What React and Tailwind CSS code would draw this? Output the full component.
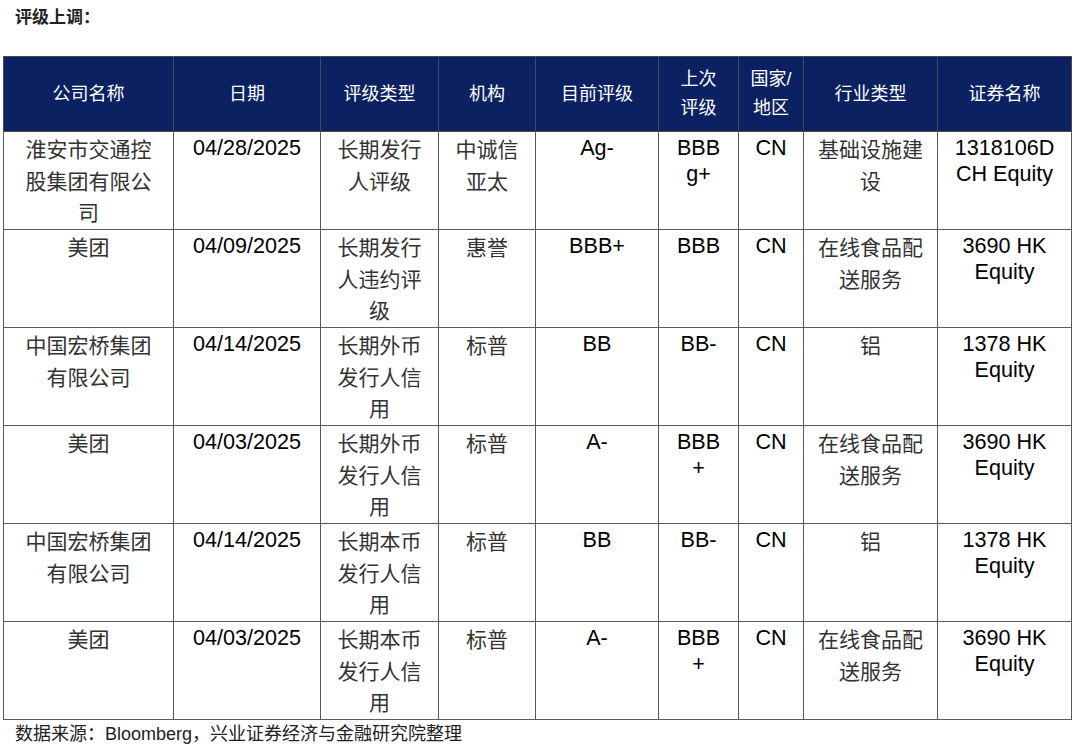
const font = { fontFamily: '"Liberation Sans", "Noto Sans CJK SC", sans-serif' };

const cols = [170, 147, 118, 97, 123, 80, 65, 134, 134];

const headers = [
  ["公司名称"],
  ["日期"],
  ["评级类型"],
  ["机构"],
  ["目前评级"],
  ["上次", "评级"],
  ["国家/", "地区"],
  ["行业类型"],
  ["证券名称"],
];

// each cell: [lines, isLatin]
const rows = [
  [
    [["淮安市交通控", "股集团有限公", "司"]],
    [["04/28/2025"], 1],
    [["长期发行", "人评级"]],
    [["中诚信", "亚太"]],
    [["Ag-"], 1],
    [["BBB", "g+"], 1],
    [["CN"], 1],
    [["基础设施建", "设"]],
    [["1318106D", "CH Equity"], 1],
  ],
  [
    [["美团"]],
    [["04/09/2025"], 1],
    [["长期发行", "人违约评", "级"]],
    [["惠誉"]],
    [["BBB+"], 1],
    [["BBB"], 1],
    [["CN"], 1],
    [["在线食品配", "送服务"]],
    [["3690 HK", "Equity"], 1],
  ],
  [
    [["中国宏桥集团", "有限公司"]],
    [["04/14/2025"], 1],
    [["长期外币", "发行人信", "用"]],
    [["标普"]],
    [["BB"], 1],
    [["BB-"], 1],
    [["CN"], 1],
    [["铝"]],
    [["1378 HK", "Equity"], 1],
  ],
  [
    [["美团"]],
    [["04/03/2025"], 1],
    [["长期外币", "发行人信", "用"]],
    [["标普"]],
    [["A-"], 1],
    [["BBB", "+"], 1],
    [["CN"], 1],
    [["在线食品配", "送服务"]],
    [["3690 HK", "Equity"], 1],
  ],
  [
    [["中国宏桥集团", "有限公司"]],
    [["04/14/2025"], 1],
    [["长期本币", "发行人信", "用"]],
    [["标普"]],
    [["BB"], 1],
    [["BB-"], 1],
    [["CN"], 1],
    [["铝"]],
    [["1378 HK", "Equity"], 1],
  ],
  [
    [["美团"]],
    [["04/03/2025"], 1],
    [["长期本币", "发行人信", "用"]],
    [["标普"]],
    [["A-"], 1],
    [["BBB", "+"], 1],
    [["CN"], 1],
    [["在线食品配", "送服务"]],
    [["3690 HK", "Equity"], 1],
  ],
];

export default function App() {
  return (
    <div className="w-[1080px] h-[747px] bg-white text-[#111] overflow-hidden" style={font}>
      {/* Title */}
      <div className="pl-[15px] pt-[5px] h-[56px] text-[17px] font-bold text-[#222]">评级上调：</div>

      <table className="ml-[3px] border-collapse table-fixed" style={{ width: 1068 }}>
        <colgroup>
          {cols.map((w, i) => (
            <col key={i} style={{ width: w }} />
          ))}
        </colgroup>
        <thead>
          <tr className="h-[75px] bg-[#0b2161]">
            {headers.map((h, i) => (
              <th
                key={i}
                className="border border-[#4a4a4a] text-white font-normal text-[18px] leading-[29px] text-center align-middle"
              >
                {h.map((l, j) => (
                  <div key={j}>{l}</div>
                ))}
              </th>
            ))}
          </tr>
        </thead>
        <tbody>
          {rows.map((r, i) => (
            <tr key={i} className="h-[98px]">
              {r.map(([lines, latin], j) => (
                <td
                  key={j}
                  className={
                    "border border-[#5a5a5a] text-center align-top " +
                    (latin
                      ? "pt-[3px] text-[21.6px] leading-[26px] text-black"
                      : "pt-[2px] text-[21px] leading-[31.5px] text-[#333]")
                  }
                >
                  {lines.map((l, k) => (
                    <div key={k}>{l}</div>
                  ))}
                </td>
              ))}
            </tr>
          ))}
        </tbody>
      </table>

      {/* Source */}
      <div className="pl-[15px] pt-[1px] text-[18px] leading-[26px] text-[#222]">数据来源：Bloomberg，兴业证券经济与金融研究院整理</div>
    </div>
  );
}
